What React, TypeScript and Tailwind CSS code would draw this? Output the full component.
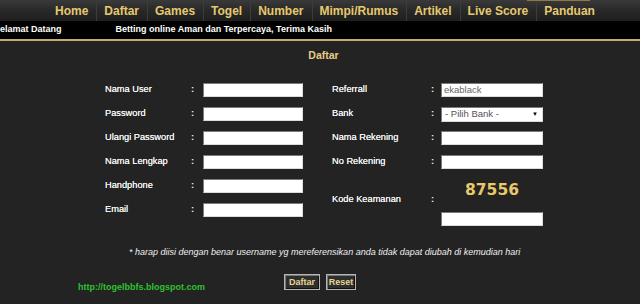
import React from "react";

const navItems = ["Home", "Daftar", "Games", "Togel", "Number", "Mimpi/Rumus", "Artikel", "Live Score", "Panduan"];

function TextBox({ value }: { value?: string }) {
  return (
    <div className="w-full h-[14px] bg-white border border-t-[#7a7a7a] border-l-[#7a7a7a] border-b-[#dcdcdc] border-r-[#dcdcdc] flex items-center pl-[2px] text-[9.5px] text-[#666] leading-none">
      {value}
    </div>
  );
}

function Row({ label, children, lw, cw }: { label: string; children: React.ReactNode; lw: string; cw: string }) {
  return (
    <div className="flex items-center h-[24px]">
      <div className={`${lw} text-[9.25px] text-[#f4f4f4] [text-shadow:0_0_0.4px_#fff]`}>{label}</div>
      <div className={`${cw} text-[9.25px] text-[#f2f2f2] font-bold`}>:</div>
      <div className="flex-1">{children}</div>
    </div>
  );
}

export default function App() {
  return (
    <div className="w-[640px] h-[304px] overflow-hidden bg-[#232323] flex flex-col" style={{ fontFamily: '"Liberation Sans", Arial, sans-serif' }}>
      {/* nav */}
      <div className="relative h-[21px] bg-gradient-to-b from-[#3a3a3a] via-[#282828] to-[#1f1f1f] flex items-center pl-[48px]">
        <div className="absolute top-0 left-[527px] w-[63px] h-[1px] bg-[#8f7b42]" />
        {navItems.map((n, i) => (
          <React.Fragment key={n}>
            {i > 0 && <div className="w-[1px] h-[21px] bg-[#151515] border-r border-[#3c3c3c]" />}
            <div className="pl-[7px] pr-[8px] text-[12px] font-bold text-[#e6c96e] leading-none">{n}</div>
          </React.Fragment>
        ))}
      </div>
      {/* marquee bar */}
      <div className="h-[18px] bg-black flex items-center text-[9px] font-bold text-white whitespace-nowrap overflow-hidden">
        <span className="ml-[-6px]">Selamat Datang</span>
        <span className="ml-[54px]">Betting online Aman dan Terpercaya, Terima Kasih</span>
      </div>
      <div className="h-[2px] bg-[#c7ad6e]" />
      {/* main */}
      <div className="flex-1 flex flex-col">
        <div className="h-[30px] flex items-center justify-center pl-[7px] text-[10.5px] font-bold text-[#e8cd85]">Daftar</div>
        <div className="mt-[7px] flex pl-[105px]">
          <div className="w-[198px]">
            <Row label="Nama User" lw="w-[86px]" cw="w-[12px]"><TextBox /></Row>
            <Row label="Password" lw="w-[86px]" cw="w-[12px]"><TextBox /></Row>
            <Row label="Ulangi Password" lw="w-[86px]" cw="w-[12px]"><TextBox /></Row>
            <Row label="Nama Lengkap" lw="w-[86px]" cw="w-[12px]"><TextBox /></Row>
            <Row label="Handphone" lw="w-[86px]" cw="w-[12px]"><TextBox /></Row>
            <Row label="Email" lw="w-[86px]" cw="w-[12px]"><TextBox /></Row>
          </div>
          <div className="ml-[29px] w-[211px]">
            <Row label="Referrall" lw="w-[99px]" cw="w-[10px]"><TextBox value="ekablack" /></Row>
            <Row label="Bank" lw="w-[99px]" cw="w-[10px]">
              <div className="w-full h-[15px] bg-white border border-t-[#7a7a7a] border-l-[#7a7a7a] border-b-[#dcdcdc] border-r-[#dcdcdc] flex items-center justify-between pl-[3px] pr-[4px] text-[9.5px] text-[#5a4f5a] leading-none">
                <span>- Pilih Bank -</span>
                <span className="text-[6px] text-black">▼</span>
              </div>
            </Row>
            <Row label="Nama Rekening" lw="w-[99px]" cw="w-[10px]"><TextBox /></Row>
            <Row label="No Rekening" lw="w-[99px]" cw="w-[10px]"><TextBox /></Row>
            <div className="flex items-center">
              <div className="w-[99px] text-[9.25px] text-[#f4f4f4] [text-shadow:0_0_0.4px_#fff]">Kode Keamanan</div>
              <div className="w-[10px] text-[9.25px] text-[#f2f2f2] font-bold">:</div>
              <div className="flex-1 flex flex-col pt-[8px]">
                <div className="h-[17px] flex items-center justify-center text-[15.5px] font-bold text-[#e8c96a] leading-none" style={{ fontFamily: '"DejaVu Sans", Verdana, sans-serif' }}>87556</div>
                <div className="mt-[13px]"><TextBox /></div>
              </div>
            </div>
          </div>
        </div>
        <div className="mt-[20px] h-[14px] flex items-center pl-[129px] text-[9px] italic text-[#f0f0f0]">
          * harap diisi dengan benar username yg mereferensikan anda tidak dapat diubah di kemudian hari
        </div>
        <div className="mt-[14px] grid grid-cols-[1fr_auto_1fr]">
          <div className="pl-[78px] pt-[9px] text-[9px] font-bold text-[#2fc12f] leading-none">http://togelbbfs.blogspot.com</div>
          <div className="flex gap-[6px]">
            <div className="w-[36px] h-[16px] border border-[#b5b5b5] bg-[#2e2e2e] shadow-[inset_1px_1px_0_#777,inset_-1px_-1px_0_#111] flex items-center justify-center text-[9px] font-bold text-[#e8d590] leading-none">Daftar</div>
            <div className="w-[30px] h-[16px] border border-[#b5b5b5] bg-[#2e2e2e] shadow-[inset_1px_1px_0_#777,inset_-1px_-1px_0_#111] flex items-center justify-center text-[9px] font-bold text-[#e8d590] leading-none">Reset</div>
          </div>
          <div />
        </div>
      </div>
    </div>
  );
}
